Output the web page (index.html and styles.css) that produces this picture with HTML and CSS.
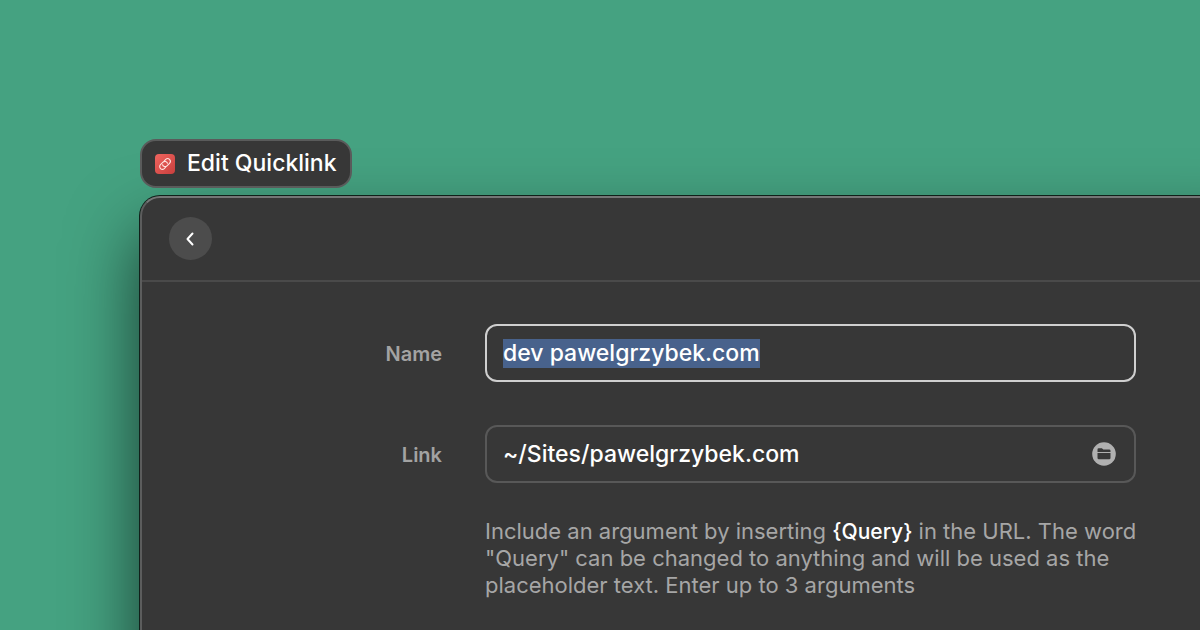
FILE: index.html
```html
<!DOCTYPE html>
<html lang="en">
<head>
<meta charset="utf-8">
<title>Edit Quicklink</title>
<link rel="stylesheet" href="styles.css">
</head>
<body>
<main class="desktop">
  <h1 class="tag">
    <svg class="tag-icon" viewBox="0 0 20 20" aria-hidden="true">
      <defs>
        <linearGradient id="red" x1="0" y1="0" x2="1" y2="1">
          <stop offset="0" stop-color="#f0655f"/>
          <stop offset="1" stop-color="#c93f3d"/>
        </linearGradient>
      </defs>
      <rect width="20" height="20" rx="4" fill="url(#red)"/>
      <g transform="rotate(-45 10 10)" fill="none" stroke="#ffe3e0" stroke-width="1.100" stroke-linecap="round">
        <path d="M8.200 12.700H6.300a2.700 2.700 0 0 1 0-5.400h3.600a2.700 2.700 0 0 1 2.400 3.900"/>
        <path d="M11.800 7.300h1.900a2.700 2.700 0 0 1 0 5.400h-3.600A2.700 2.700 0 0 1 7.700 8.800"/>
      </g>
    </svg>
    Edit Quicklink
  </h1>
  <section class="window">
    <header class="toolbar">
      <button class="back" type="button" aria-label="Back">
        <svg width="43" height="43" viewBox="0 0 43 43" fill="none" stroke="#fff" stroke-width="2" stroke-linecap="round" stroke-linejoin="round" aria-hidden="true"><path d="M23.500 16.500 18.500 22l5 5.500"/></svg>
      </button>
    </header>
    <form class="form">
      <label class="label" for="name">Name</label>
      <div class="field field-active">
        <input class="input" id="name" type="text" value="dev pawelgrzybek.com" spellcheck="false" autocomplete="off">
      </div>
      <label class="label" for="link">Link</label>
      <div class="field">
        <input class="input" id="link" type="text" value="~/Sites/pawelgrzybek.com" spellcheck="false" autocomplete="off">
        <button class="browse" type="button" aria-label="Choose folder">
          <svg width="24" height="24" viewBox="0 0 24 24" aria-hidden="true">
            <circle cx="12" cy="12" r="11.800" fill="#b0b0b0"/>
            <path d="M5.500 10V7.500q0-1.200 1.200-1.200h3.200l1.400 1.200h5.900q1.300 0 1.300 1.300V10z" fill="#383838"/>
            <path d="M5.500 11h13v4.900q0 1.400-1.400 1.400H6.900q-1.400 0-1.400-1.400z" fill="#383838"/>
          </svg>
        </button>
      </div>
      <p class="help">Include an argument by inserting <strong class="token">{Query}</strong> in the URL. The word "Query" can be changed to anything and will be used as the placeholder text. Enter up to 3 arguments</p>
    </form>
  </section>
</main>
<script src="main.js"></script>
</body>
</html>
```

FILE: styles.css
```css
* {
  box-sizing: border-box;
}

body {
  margin: 0;
  background: #45a281;
  color: #fff;
  font-family: Inter, "Liberation Sans", sans-serif;
}

.desktop {
  display: flex;
  flex-direction: column;
  align-items: flex-start;
  gap: 8px;
  height: 100vh;
  padding: 139px 0 0 140px;
  overflow: hidden;
}

.tag {
  display: flex;
  flex: none;
  align-items: center;
  gap: 12px;
  margin: 0;
  padding: 8px 13px;
  border: 2px solid #5a5b5b;
  border-radius: 16px;
  background: #373737;
  font-size: 23px;
  font-weight: 500;
  line-height: 29px;
  z-index: 1;
}

.tag-icon {
  width: 20px;
  height: 20px;
}

.window {
  flex: 1 0 auto;
  align-self: stretch;
  margin-right: -64px;
  margin-bottom: -64px;
  border: 2px solid #5c5d5d;
  border-top-color: #757676;
  border-radius: 20px;
  background: #373737;
  box-shadow: 0 0 0 1px #10201a, 0 36px 70px rgba(0, 0, 0, 0.64);
}

.toolbar {
  padding: 19px 27px 20px;
  border-bottom: 2px solid #4a4a4a;
}

.back {
  display: block;
  width: 43px;
  height: 43px;
  padding: 0;
  border: 0;
  border-radius: 50%;
  background: #4c4c4c;
}

.form {
  display: grid;
  grid-template-columns: 300px 1fr;
  column-gap: 43px;
  row-gap: 43px;
  align-items: center;
  padding: 42px 126px 40px 0;
}

.label {
  padding-top: 2px;
  color: #a3a3a3;
  font-size: 20px;
  font-weight: 600;
  text-align: right;
}

.field {
  display: flex;
  align-items: center;
  height: 58px;
  padding: 0 18px 0 16px;
  border: 2px solid #585858;
  border-radius: 12px;
}

.field-active {
  border-color: #cfcfcf;
}

.input {
  flex: 1;
  min-width: 0;
  padding: 0;
  border: 0;
  outline: 0;
  background: transparent;
  color: #fff;
  font: 500 23px/29px Inter, "Liberation Sans", sans-serif;
  caret-color: transparent;
}

.input::selection {
  background: #48628c;
  color: #fff;
}

.browse {
  display: flex;
  padding: 0;
  border: 0;
  background: transparent;
}

.help {
  grid-column: 2;
  margin: -8px -12px 0 0;
  color: #a6a6a6;
  font-size: 22px;
  line-height: 27px;
}

.token {
  color: #fff;
  font-size: 21px;
  font-weight: 500;
}
```

FILE: main.js
```js
const nameInput = document.getElementById("name");
nameInput.focus();
nameInput.select();
```
